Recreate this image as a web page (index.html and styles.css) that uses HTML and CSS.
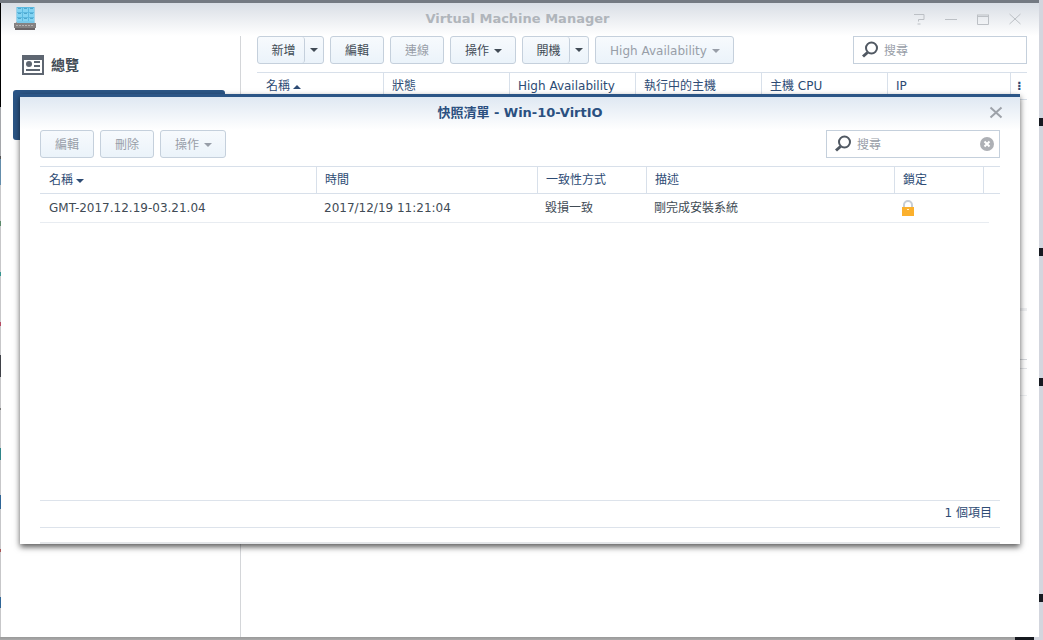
FILE: index.html
```html
<!DOCTYPE html>
<html lang="zh-Hant">
<head>
<meta charset="utf-8">
<title>Virtual Machine Manager</title>
<link rel="stylesheet" href="styles.css">
</head>
<body>
<div class="window">
  <header class="titlebar">
    <svg class="app-icon" width="24" height="24" viewBox="0 0 24 24" aria-hidden="true">
      <path fill="#5cb9e0" d="M3.500 0h18v17h-18z"/>
      <path fill="#82d3f2" d="M4 1h5v4H4zM10 1h5v4h-5zM16 1h5v4h-5zM4 6h5v4H4zM10 6h5v4h-5zM16 6h5v4h-5zM4 11h5v4H4zM10 11h5v4h-5zM16 11h5v4h-5z"/>
      <path stroke="#4fa6cc" d="M5 1.500h3m3 0h3m3 0h3M5 6.500h3m3 0h3m3 0h3M5 11.500h3m3 0h3m3 0h3"/>
      <path fill="#a6a5a5" d="M3 15h18l1 3H2z"/>
      <path fill="#7ac8e8" d="M4 14h17v2H4z"/>
      <path fill="#858282" d="M1 16h22v5H1z"/>
      <path fill="#696466" d="M2 21h20v2H2z"/>
      <path stroke="#b7b3b3" stroke-dasharray="2 1" d="M3 18.500h18"/>
    </svg>
    <h1 class="title">Virtual Machine Manager</h1>
    <div class="window-controls">
      <button class="control" aria-label="說明"><svg width="14" height="14" viewBox="0 0 14 14"><path d="M2 2.500h10v5H6.500v2M5.500 12h3"/></svg></button>
      <button class="control" aria-label="最小化"><svg width="14" height="14" viewBox="0 0 14 14"><path d="M1 7.500h12"/></svg></button>
      <button class="control" aria-label="最大化"><svg width="14" height="14" viewBox="0 0 14 14"><path d="M1.500 3v9.500h11V3M1 3h12M1 4.500h12"/></svg></button>
      <button class="control" aria-label="關閉"><svg width="14" height="14" viewBox="0 0 14 14"><path d="M1.500 2l11 10M12.500 2l-11 10"/></svg></button>
    </div>
  </header>
  <div class="workspace">
    <nav class="sidebar">
      <button class="nav-item">
        <svg width="22" height="20" viewBox="0 0 22 20" aria-hidden="true"><path fill="#5e6671" fill-rule="evenodd" d="M0 0h22v20H0zM2 5v13h18V5z"/><circle cx="7" cy="9" r="3" fill="#5e6671"/><path stroke="#5e6671" stroke-width="2" d="M12 7h6M12 11h6M4 15h14"/></svg>
        總覽
      </button>
      <button class="nav-item selected" aria-label="虛擬機器"></button>
    </nav>
    <main class="content">
      <div class="toolbar">
        <div class="split"><button class="split-main">新增</button><button class="split-menu" aria-label="新增選單"><span class="caret"></span></button></div>
        <button class="button">編輯</button>
        <button class="button" disabled>連線</button>
        <button class="button">操作<span class="caret"></span></button>
        <div class="split"><button class="split-main">開機</button><button class="split-menu" aria-label="開機選單"><span class="caret"></span></button></div>
        <button class="button" disabled>High Availability<span class="caret"></span></button>
        <label class="search">
          <svg width="18" height="18" viewBox="0 0 18 18" aria-hidden="true"><circle cx="10.500" cy="7" r="5.500"/><path stroke-width="3" d="M6.500 11.500L2 15.500"/></svg>
          <input type="text" placeholder="搜尋" aria-label="搜尋虛擬機器">
        </label>
      </div>
      <table class="grid machines">
        <colgroup><col class="col-first"><col class="col-machine"><col class="col-machine"><col class="col-machine"><col class="col-machine"><col><col class="col-end"></colgroup>
        <thead><tr><th>名稱<span class="caret up"></span></th><th>狀態</th><th>High Availability</th><th>執行中的主機</th><th>主機 CPU</th><th>IP</th><th class="more">⁝</th></tr></thead>
      </table>
      <div class="machine-list"></div>
      <div class="detail-tabs"></div>
      <div class="detail-gap"></div>
      <div class="detail-head"></div>
    </main>
  </div>
</div>

<section class="dialog" role="dialog" aria-labelledby="dialog-title">
  <header class="dialog-header">
    <h2 class="dialog-title" id="dialog-title">快照清單 - Win-10-VirtIO</h2>
    <button class="control close" aria-label="關閉"><svg width="14" height="14" viewBox="0 0 14 14"><path d="M1.500 1.500l11 10M12.500 1.500l-11 10"/></svg></button>
  </header>
  <div class="dialog-body">
    <div class="toolbar">
      <button class="button" disabled>編輯</button>
      <button class="button" disabled>刪除</button>
      <button class="button" disabled>操作<span class="caret"></span></button>
      <label class="search">
        <svg width="18" height="18" viewBox="0 0 18 18" aria-hidden="true"><circle cx="10.500" cy="7" r="5.500"/><path stroke-width="3" d="M6.500 11.500L2 15.500"/></svg>
        <input type="text" placeholder="搜尋" aria-label="搜尋快照">
        <button class="clear" aria-label="清除"><svg class="clear-icon" width="14" height="14" viewBox="0 0 14 14"><circle cx="7" cy="7" r="7"/><path d="M4.500 4.500l5 5M9.500 4.500l-5 5"/></svg></button>
      </label>
    </div>
    <table class="grid snapshots">
      <colgroup><col class="col-name"><col class="col-time"><col class="col-mode"><col><col class="col-lock"><col class="col-end"></colgroup>
      <thead><tr><th>名稱<span class="caret"></span></th><th>時間</th><th>一致性方式</th><th>描述</th><th>鎖定</th><th></th></tr></thead>
      <tbody><tr><td>GMT-2017.12.19-03.21.04</td><td>2017/12/19 11:21:04</td><td>毀損一致</td><td>剛完成安裝系統</td>
        <td><svg class="lock" width="12" height="16" viewBox="0 0 12 16" role="img" aria-label="已鎖定"><path fill="none" stroke="#c6cdd5" stroke-width="2" d="M2 8V5a4 4 0 0 1 8 0v3"/><path fill="#fbb02d" d="M0 7h12v9H0z"/><path fill="#fff3d6" d="M5 9h2v1H5z"/></svg></td><td class="row-end"></td></tr></tbody>
    </table>
    <div class="spacer"></div>
    <footer class="status">1 個項目</footer>
    <div class="dialog-foot"></div>
  </div>
</section>
</body>
</html>
```
FILE: styles.css
```css
* { box-sizing: border-box; }

body {
  margin: 0;
  min-height: 100vh;
  padding: 3px 4px 3px 1px;
  display: flex;
  flex-direction: column;
  overflow: hidden;
  font: 12px/20px "DejaVu Sans", "Noto Sans CJK TC", sans-serif;
  color: #414b55;
  background:
    linear-gradient(#747a82, #747a82) top left / calc(100% - 4px) 3px no-repeat,
    linear-gradient(#16191f, #16191f) right 9px bottom 0 / 19px 3px no-repeat,
    linear-gradient(#999, #aaa) bottom left / calc(100% - 28px) 3px no-repeat,
    linear-gradient(#000 107px, #a5a7ab 107px 156px, #555 156px 159px, #648dab 159px 185px, #c7c7c9 185px 221px, #5b8a6a 221px 226px, #c7c7c9 226px 272px, #35958f 272px 276px, #c7c7c9 276px 322px, #b64b63 322px 326px, #c7c7c9 326px 355px, #3f4147 355px 377px, #c7c7c9 377px 408px, #777 408px 410px, #c7c7c9 410px 448px, #2f8589 448px 460px, #c7c7c9 460px 495px, #2f6596 495px 509px, #c7c7c9 509px 549px, #a55 549px 552px, #c7c7c9 552px 597px, #2f6596 597px 608px, #c7c7c9 608px) left / 1px 100% no-repeat,
    linear-gradient(#d3d6de 118px, #171b22 118px 126px, #d3d6de 126px 248px, #171b22 248px 256px, #d3d6de 256px 378px, #171b22 378px 386px, #d3d6de 386px 594px, #171b22 594px 602px, #d3d6de 602px) right / 4px 100% no-repeat,
    #d3d6de;
}

h1, h2 { margin: 0; font-size: 13px; line-height: 20px; font-weight: bold; }
button, input { font: inherit; color: inherit; }
button { padding: 0; border: 0; background: none; }

.window {
  flex: 1;
  display: flex;
  flex-direction: column;
  background: #fff;
}

.titlebar {
  display: grid;
  grid-template-columns: 1fr auto 1fr;
  align-items: center;
  height: 33px;
  padding: 0 17px 1px 12px;
  background: linear-gradient(#d9dee5, #fff);
}
.title { color: #b0b5bb; }
.window-controls { display: flex; justify-content: flex-end; gap: 18px; }
.control { display: flex; width: 14px; height: 14px; }
.control svg { fill: none; stroke: #bcc0c5; stroke-width: 1; }
.control.close svg { stroke: #9da2a9; stroke-width: 2; }

.workspace { flex: 1; display: flex; }
.sidebar {
  width: 240px;
  padding: 4px 15px 0 12px;
  border-right: 1px solid #d4d6d9;
}
.nav-item {
  display: flex;
  align-items: center;
  gap: 7px;
  width: 100%;
  height: 50px;
  padding-left: 9px;
  border-radius: 3px;
  font-size: 14px;
  font-weight: bold;
}
.nav-item.selected { background: #2b5586; }

.content {
  flex: 1;
  display: flex;
  flex-direction: column;
  min-width: 0;
  padding: 0 12px 0 16px;
}

.toolbar { display: flex; gap: 6px; height: 28px; }
.button, .split {
  display: flex;
  align-items: center;
  border: 1px solid #c5d0dc;
  border-radius: 3px;
  background: linear-gradient(#f7fafd, #ebf3fa);
}
.button { gap: 5px; padding: 1px 14px 0; white-space: nowrap; }
.button:has(.caret) { padding-right: 13px; }
.button:disabled { color: #989ea8; }
.split-main {
  width: 47px;
  height: 26px;
  padding: 1px 0 0 5px;
  border-right: 1px solid #c5d0dc;
  border-radius: 3px;
}
.split-menu { display: flex; align-items: center; justify-content: center; width: 18px; height: 26px; }

.caret {
  display: inline-block;
  border: 4px solid transparent;
  border-top-color: currentColor;
  border-bottom-width: 0;
}
.caret.up { border-top: 0; border-bottom: 4px solid currentColor; }

.search {
  display: flex;
  align-items: center;
  gap: 5px;
  width: 174px;
  margin-left: auto;
  padding: 0 5px 0 7px;
  border: 1px solid #c5d0dc;
  background: #fff;
}
.search svg { flex: none; fill: none; stroke: #505862; stroke-width: 2; }
.search input { flex: 1; min-width: 0; padding: 1px 0 0; border: 0; outline: 0; background: none; }
.search input::placeholder { color: #989ea8; }
.clear { display: flex; }
.search .clear-icon circle { fill: #adb0b5; stroke: none; }
.search .clear-icon path { stroke: #fff; }

.grid {
  width: 100%;
  margin-top: 8px;
  table-layout: fixed;
  border-collapse: separate;
  border-spacing: 0;
}
.grid th {
  height: 28px;
  padding: 0 0 0 8px;
  border: solid #d8e0ea;
  border-width: 1px 1px 1px 0;
  font-weight: normal;
  text-align: left;
  color: #2d4b74;
  white-space: nowrap;
}
.grid th:first-child, .grid td:first-child { padding-left: 9px; }
.grid th:last-child { border-right: 0; }
.grid th .caret { margin-left: 3px; vertical-align: 1px; }
.grid th.more { padding: 0 0 0 6px; font-weight: bold; }
.grid td {
  height: 29px;
  padding: 0 0 0 7px;
  border-bottom: 1px solid #e8ecf1;
}
.grid td.row-end {
  border-bottom: 0;
  background: linear-gradient(#e8ecf1, #e8ecf1) left bottom / 5px 1px no-repeat;
}
.col-first { width: 127px; }
.col-machine { width: 126px; }
.col-end { width: 16px; }
.col-name { width: 277px; }
.col-time { width: 221px; }
.col-mode { width: 109px; }
.col-lock { width: 89px; }
.lock { display: block; }

.machine-list { height: 211px; border-bottom: 3px solid #eeeff1; }
.detail-tabs { height: 49px; border-bottom: 1px solid #d4d7db; }
.detail-gap { height: 9px; border-bottom: 1px solid #e2e4e7; }
.detail-head { height: 27px; border-bottom: 1px solid #edeff1; }

.dialog {
  position: absolute;
  inset: 94px 23px 96px 20px;
  display: flex;
  flex-direction: column;
  border-top: 3px solid #2b5586;
  background: #fff;
  box-shadow: 0 3px 6px rgba(0, 0, 0, .65);
}
.dialog-header {
  display: grid;
  grid-template-columns: 1fr auto 1fr;
  align-items: center;
  height: 33px;
  padding: 0 17px 1px;
  background: linear-gradient(#dfe8f2, #fff);
}
.dialog-title { grid-column: 2; color: #2b5080; }
.close { justify-self: end; }
.dialog-body { flex: 1; display: flex; flex-direction: column; padding: 0 20px; }
.spacer { flex: 1; }
.status {
  height: 28px;
  padding: 2px 8px 0 0;
  border: solid #dde3eb;
  border-width: 1px 0;
  text-align: right;
  color: #2d4b74;
}
.dialog-foot { height: 16px; border-bottom: 2px solid #e3e5e8; }
```
